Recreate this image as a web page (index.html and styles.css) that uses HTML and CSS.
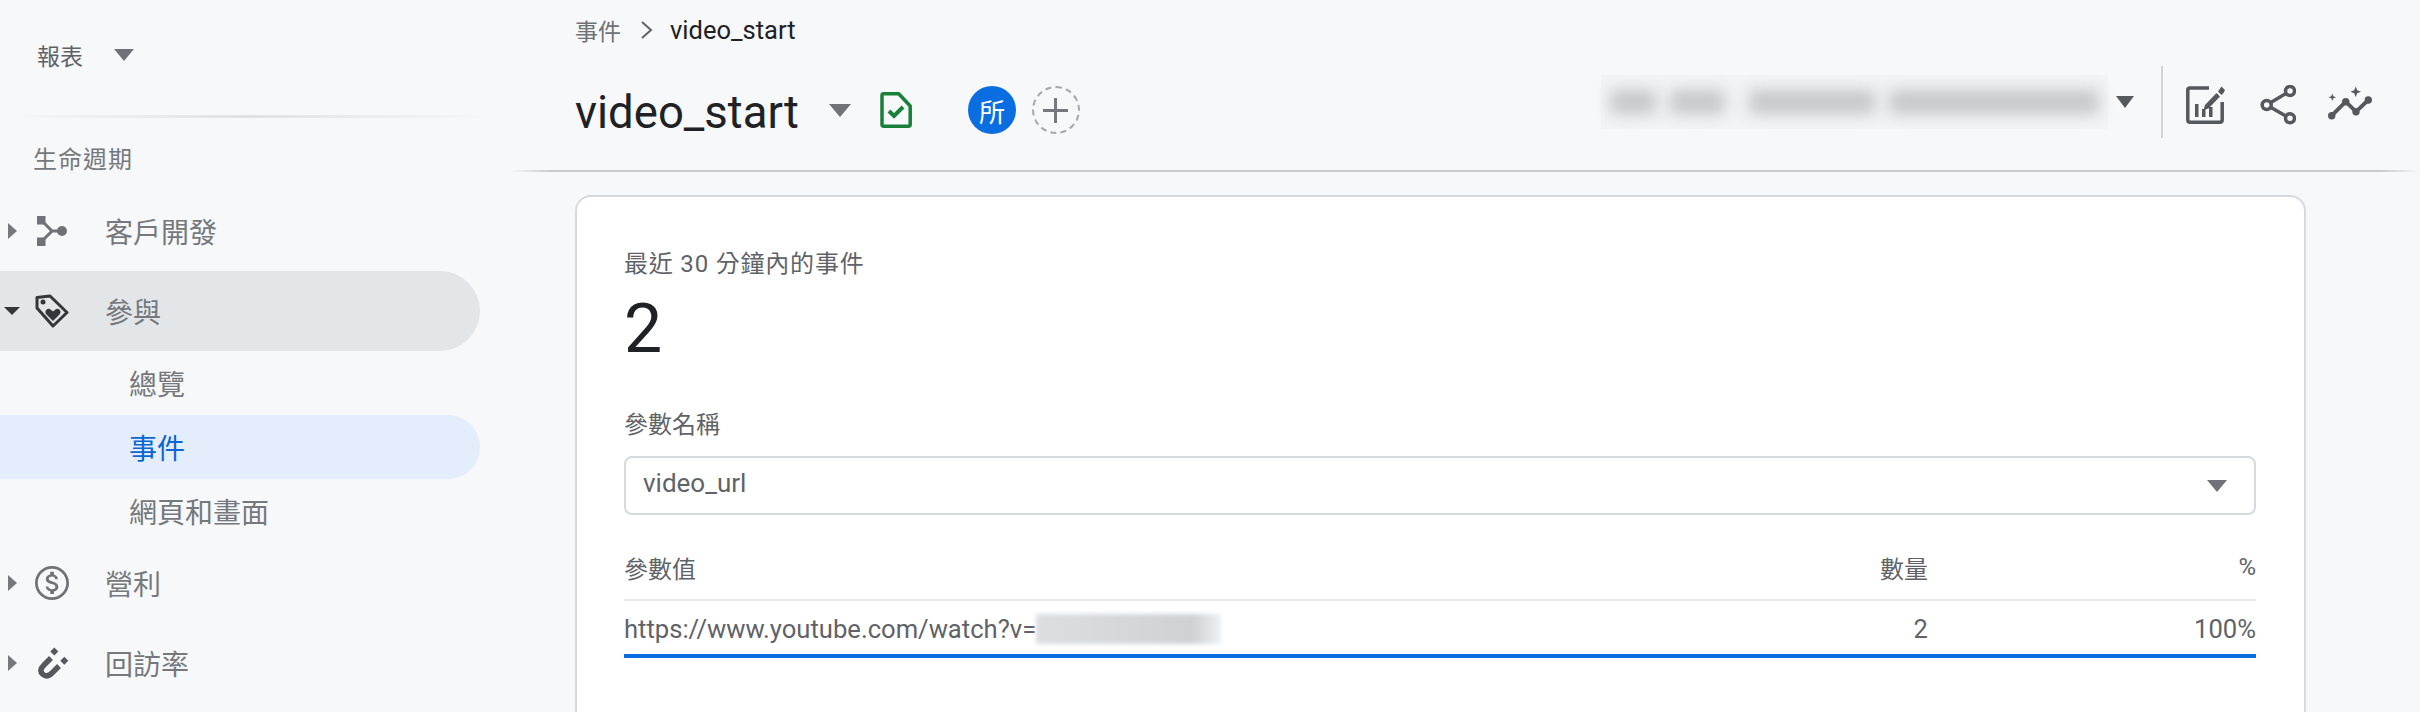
FILE: index.html
```html
<!DOCTYPE html>
<html lang="zh-Hant">
<head>
  <meta charset="utf-8">
  <title>video_start</title>
  <link rel="stylesheet" href="styles.css">
</head>
<body>

<nav class="sidebar">
  <div class="reports-head">
    <span class="reports-label">報表</span>
    <span class="caret-down caret-head"></span>
  </div>
  <div class="side-rule"></div>
  <div class="side-title">生命週期</div>

  <div class="nav-row nav-acq">
    <span class="caret-right"></span>
    <svg class="nav-icon icon-acq" viewBox="0 0 30 30">
      <path d="M0 0h8.500v8.500H0zM0 21.500h8.500V30H0z" fill="#6f7276"/>
      <path d="M5 5l10 10-10 10M15 15h9" fill="none" stroke="#6f7276" stroke-width="3"/>
      <circle cx="25" cy="15" r="5" fill="#6f7276"/>
    </svg>
    <span class="nav-text">客戶開發</span>
  </div>

  <div class="nav-row nav-open">
    <span class="caret-small"></span>
    <svg class="nav-icon" viewBox="0 0 34 34">
      <path d="M2 3.500l13-1.500 17 16.500L18 32 2 14z" fill="none" stroke="#33373b" stroke-width="3" stroke-linejoin="round"/>
      <circle cx="8" cy="8" r="2.500" fill="#33373b"/>
      <path d="M18 27l-6.500-6.500c-3-3 1-7.500 4-5l2.500 2 2.500-2c3-2.500 7 2 4 5z" fill="#33373b"/>
    </svg>
    <span class="nav-text">參與</span>
  </div>
  <div class="sub-row">總覽</div>
  <div class="sub-row sub-active">事件</div>
  <div class="sub-row">網頁和畫面</div>

  <div class="nav-row">
    <span class="caret-right"></span>
    <svg class="nav-icon" viewBox="2 2 20 20">
      <path fill="#6f7276" d="M12 2C6.480 2 2 6.480 2 12s4.480 10 10 10 10-4.480 10-10S17.520 2 12 2zm0 18.400c-4.630 0-8.400-3.770-8.400-8.400S7.370 3.600 12 3.600s8.400 3.770 8.400 8.400-3.770 8.400-8.400 8.400z"/>
      <path fill="#6f7276" transform="translate(12 12) scale(1.250) translate(-12 -12)" d="M12.200 11.300c-1.300-.35-1.750-.7-1.750-1.250 0-.63.6-1.070 1.570-1.070 1.030 0 1.430.5 1.460 1.230h1.280c-.04-1-.65-1.930-1.870-2.230V6.700h-1.750v1.270c-1.130.24-2.040.98-2.040 2.100 0 1.350 1.120 2.020 2.750 2.410 1.460.35 1.750.86 1.750 1.400 0 .4-.29 1.040-1.570 1.040-1.200 0-1.670-.54-1.740-1.230H9.030c.08 1.280 1.020 2 2.150 2.230v1.280h1.750v-1.250c1.140-.22 2.040-.87 2.050-2.080-.01-1.650-1.430-2.220-2.780-2.570z"/>
    </svg>
    <span class="nav-text">營利</span>
  </div>

  <div class="nav-row">
    <span class="caret-right"></span>
    <svg class="nav-icon icon-magnet" viewBox="0 0 32 32">
      <path d="M14 11l-7 7c-4 4-4 7-1 9.500 3 2.500 6 1.500 9-1.500l7-7" fill="none" stroke="#55585c" stroke-width="5.500"/>
      <path d="M17.300.5l4 4-4 4-4-4zM27.300 9.700l4 4-4 4-4-4z" fill="#55585c"/>
    </svg>
    <span class="nav-text">回訪率</span>
  </div>
</nav>

<main class="content">
  <header class="top">
    <div class="crumbs">
      <span class="crumb-link">事件</span>
      <svg class="crumb-sep" viewBox="0 0 14 20"><path d="M2 2l9 8-9 8" fill="none" stroke="#5f6368" stroke-width="2"/></svg>
      <span class="crumb-now">video_start</span>
    </div>
    <div class="title-bar">
      <h1 class="title">video_start</h1>
      <span class="caret-down caret-title"></span>
      <svg class="file-icon" viewBox="0 0 32 36">
        <path d="M2 3.500q0-1.700 1.700-1.700h15L30.200 14v18.500q0 1.700-1.700 1.700H3.700q-1.700 0-1.700-1.700z" fill="none" stroke="#188038" stroke-width="3.500" stroke-linejoin="round"/>
        <path d="M9 19l5 5 9-9" fill="none" stroke="#188038" stroke-width="4"/>
      </svg>
      <span class="badge">所</span>
      <span class="add-circle">
        <svg class="add-plus" viewBox="0 0 25 25"><path d="M12.500 0v25M0 12.500h25" stroke="#75787c" stroke-width="3"/></svg>
      </span>
      <div class="actions">
        <span class="blur-name"><i class="blur-a"></i><i class="blur-b"></i><i class="blur-c"></i><i class="blur-d"></i></span>
        <span class="caret-down caret-acct"></span>
        <span class="actions-rule"></span>
        <svg class="act-report" viewBox="0 0 40 40">
          <path d="M24 3H5Q2.800 3 2.800 5v30q0 2.200 2.200 2.200h30q2.200 0 2.200-2.200V17" fill="none" stroke="#55585c" stroke-width="3.500"/>
          <path d="M10 19h3.500v13H10zM17 24h3.500v8H17zM24 22h3.500v10H24z" fill="#55585c"/>
          <path d="M20 20l-1.500 5 5-1.500L35 11.500 31.500 8zM33 6.500L36.500 10l2-2L40 5 36.500 1.500z" fill="#55585c"/>
        </svg>
        <svg class="act-share" viewBox="0 0 36 40">
          <path d="M30 6L6.700 20 30 33.300" fill="none" stroke="#55585c" stroke-width="3.500"/>
          <circle cx="30" cy="6" r="4.500" fill="#f7f8fa" stroke="#55585c" stroke-width="3.500"/>
          <circle cx="6.700" cy="20" r="4.500" fill="#f7f8fa" stroke="#55585c" stroke-width="3.500"/>
          <circle cx="30" cy="33.300" r="4.500" fill="#f7f8fa" stroke="#55585c" stroke-width="3.500"/>
        </svg>
        <svg class="act-insights" viewBox="0 0 44 34">
          <path d="M3.700 29.700l14-14L28 25.700 40.300 14" fill="none" stroke="#55585c" stroke-width="3.800"/>
          <circle cx="3.700" cy="29.700" r="3.700" fill="#55585c"/>
          <circle cx="17.700" cy="15.700" r="3.700" fill="#55585c"/>
          <circle cx="28" cy="25.700" r="3.700" fill="#55585c"/>
          <circle cx="40.300" cy="14" r="3.700" fill="#55585c"/>
          <path d="M27.700.5l1.500 3.700 3.700 1.500-3.700 1.500-1.500 3.700-1.500-3.700-3.700-1.500 3.700-1.500zM4.300 7.500l1 2.800 2.800 1-2.800 1-1 2.800-1-2.800-2.800-1 2.800-1z" fill="#55585c"/>
        </svg>
      </div>
    </div>
  </header>

  <section class="card">
    <div class="card-label">最近 30 分鐘內的事件</div>
    <div class="big-num">2</div>
    <div class="field-label">參數名稱</div>
    <div class="select-box">
      <span class="select-text">video_url</span>
      <span class="caret-down caret-select"></span>
    </div>
    <div class="tbl-head">
      <span class="col-val">參數值</span>
      <span class="col-num">數量</span>
      <span class="col-pct">%</span>
    </div>
    <div class="tbl-row">
      <span class="col-val">https://www.youtube.com/watch?v=<i class="blur-url"></i></span>
      <span class="col-num">2</span>
      <span class="col-pct">100%</span>
    </div>
  </section>
</main>

</body>
</html>
```

FILE: styles.css
```css
* {
  box-sizing: border-box;
}

html, body {
  margin: 0;
  height: 712px;
  overflow: hidden;
}

body {
  display: flex;
  background: #f7f8fa;
  color: #5f6368;
  font-family: Roboto, "Noto Sans CJK TC", sans-serif;
}

/* carets */
.caret-down {
  display: inline-block;
  width: 0;
  height: 0;
  border-left: 10px solid transparent;
  border-right: 10px solid transparent;
  border-top: 12px solid #6f7276;
}

.caret-right {
  width: 0;
  height: 0;
  border-top: 8px solid transparent;
  border-bottom: 8px solid transparent;
  border-left: 9px solid #75787c;
  margin-left: 8px;
}

.caret-small {
  width: 0;
  height: 0;
  border-left: 8px solid transparent;
  border-right: 8px solid transparent;
  border-top: 8px solid #33373b;
  margin-left: 4px;
}

/* sidebar */
.sidebar {
  width: 510px;
  flex: none;
}

.reports-head {
  display: flex;
  align-items: center;
  height: 115px;
  padding: 0 0 6px 37px;
  font-size: 23px;
}

.caret-head {
  margin-left: 31px;
}

.side-rule {
  width: 496px;
  height: 3px;
  background: linear-gradient(90deg, #f7f8fa, #dfe1e3 50%, #f7f8fa);
}

.side-title {
  margin-top: 25px;
  padding-left: 33px;
  height: 34px;
  line-height: 34px;
  font-size: 24px;
  letter-spacing: 1px;
  color: #75787c;
}

.nav-row {
  display: flex;
  align-items: center;
  position: relative;
  width: 480px;
  height: 80px;
  font-size: 28px;
  color: #75787c;
}

.nav-icon {
  position: absolute;
  left: 35px;
  width: 34px;
  height: 34px;
}

.icon-acq {
  left: 37px;
  width: 30px;
  height: 30px;
}

.icon-magnet {
  left: 37px;
  width: 32px;
  height: 32px;
}

.nav-text {
  position: absolute;
  left: 105px;
}

.nav-acq {
  margin-top: 14px;
}

.nav-open {
  background: #e2e6e9;
  border-radius: 0 40px 40px 0;
}

.sub-row {
  display: flex;
  align-items: center;
  width: 480px;
  height: 64px;
  padding-left: 129px;
  font-size: 28px;
  color: #75787c;
}

.sub-active {
  background: #e3edfb;
  border-radius: 0 32px 32px 0;
  color: #0b66d4;
}

/* header */
.content {
  flex: 1;
  min-width: 0;
}

.top {
  height: 172px;
  padding-left: 65px;
  background: linear-gradient(90deg, #f7f8fa, #c9cbcd 40px, #c9cbcd calc(100% - 40px), #f7f8fa) bottom / 100% 2px no-repeat;
}

.crumbs {
  display: flex;
  align-items: center;
  height: 60px;
}

.crumb-link {
  font-size: 23px;
  color: #6f7276;
}

.crumb-sep {
  width: 14px;
  height: 20px;
  margin: 0 16px 0 19px;
}

.crumb-now {
  font-size: 25.500px;
  color: #202124;
}

.title-bar {
  display: flex;
  align-items: center;
  height: 100px;
}

.title {
  margin: 0;
  padding-top: 4px;
  font-size: 45.500px;
  font-weight: 400;
  color: #202124;
}

.caret-title {
  margin-left: 30px;
  border-left-width: 11px;
  border-right-width: 11px;
  border-top-width: 13px;
}

.file-icon {
  width: 32px;
  height: 36px;
  margin-left: 29px;
}

.badge {
  display: flex;
  align-items: center;
  justify-content: center;
  width: 48px;
  height: 48px;
  margin-left: 56px;
  border-radius: 50%;
  background: #0b6ee0;
  color: #fff;
  font-size: 26px;
}

.add-circle {
  display: flex;
  align-items: center;
  justify-content: center;
  width: 48px;
  height: 48px;
  margin-left: 16px;
  border: 2px dashed #a5a8ab;
  border-radius: 50%;
}

.add-plus {
  width: 25px;
  height: 25px;
}

.actions {
  display: flex;
  align-items: center;
  margin: 0 48px 16px auto;
}

.blur-name {
  display: flex;
  align-items: center;
  width: 507px;
  height: 54px;
  padding: 0 9px;
  background: #f3f4f6;
}

.blur-name i {
  height: 24px;
  background: #c4c6c9;
  filter: blur(8px);
}

.blur-a {
  width: 46px;
  background: #b8babd;
}

.blur-b {
  width: 55px;
  margin-left: 14px;
}

.blur-c {
  width: 126px;
  margin-left: 24px;
}

.blur-d {
  width: 210px;
  margin-left: 14px;
}

.caret-acct {
  margin-left: 8px;
  border-left-width: 9px;
  border-right-width: 9px;
  border-top-width: 12px;
  border-top-color: #55585c;
}

.actions-rule {
  width: 2px;
  height: 72px;
  margin: 0 22px 0 27px;
  background: #d1d3d6;
}

.act-report {
  width: 40px;
  height: 40px;
  margin-top: 6px;
}

.act-share {
  width: 36px;
  height: 40px;
  margin: 6px 0 0 35px;
}

.act-insights {
  width: 44px;
  height: 34px;
  margin: 2px 0 0 32px;
}

/* card */
.card {
  width: 1731px;
  height: 540px;
  margin: 23px 0 0 65px;
  padding: 0 48px 0 47px;
  background: #fff;
  border: 2px solid #d6d9de;
  border-bottom: 0;
  border-radius: 16px 16px 0 0;
}

.card-label {
  margin-top: 50px;
  font-size: 24px;
  line-height: 34px;
  letter-spacing: .8px;
  color: #5f6368;
}

.big-num {
  margin-top: 12px;
  font-size: 68px;
  line-height: 72px;
  color: #202124;
}

.field-label {
  margin-top: 43px;
  font-size: 24px;
  line-height: 34px;
  color: #5f6368;
}

.select-box {
  display: flex;
  align-items: center;
  justify-content: space-between;
  height: 59px;
  margin-top: 14px;
  padding: 0 27px 0 17px;
  border: 2px solid #d6d9de;
  border-radius: 8px;
  font-size: 26px;
  color: #5f6368;
}

.select-text {
  padding-bottom: 6px;
}

.tbl-head,
.tbl-row {
  display: flex;
  align-items: center;
}

.tbl-head {
  height: 54px;
  margin-top: 32px;
  padding-bottom: 12px;
  border-bottom: 2px solid #e8eaed;
  font-size: 24px;
}

.tbl-row {
  height: 57px;
  padding-top: 2px;
  border-bottom: 4px solid #0b6ee0;
  font-size: 25.600px;
}

.col-val {
  flex: 1;
  display: flex;
  align-items: center;
}

.col-num {
  width: 100px;
  text-align: right;
}

.col-pct {
  width: 328px;
  text-align: right;
}

.blur-url {
  display: block;
  width: 185px;
  height: 30px;
  background: linear-gradient(90deg, #dcdee1, #cfd1d4 85%, #eef1f5);
  filter: blur(2px);
}
```
